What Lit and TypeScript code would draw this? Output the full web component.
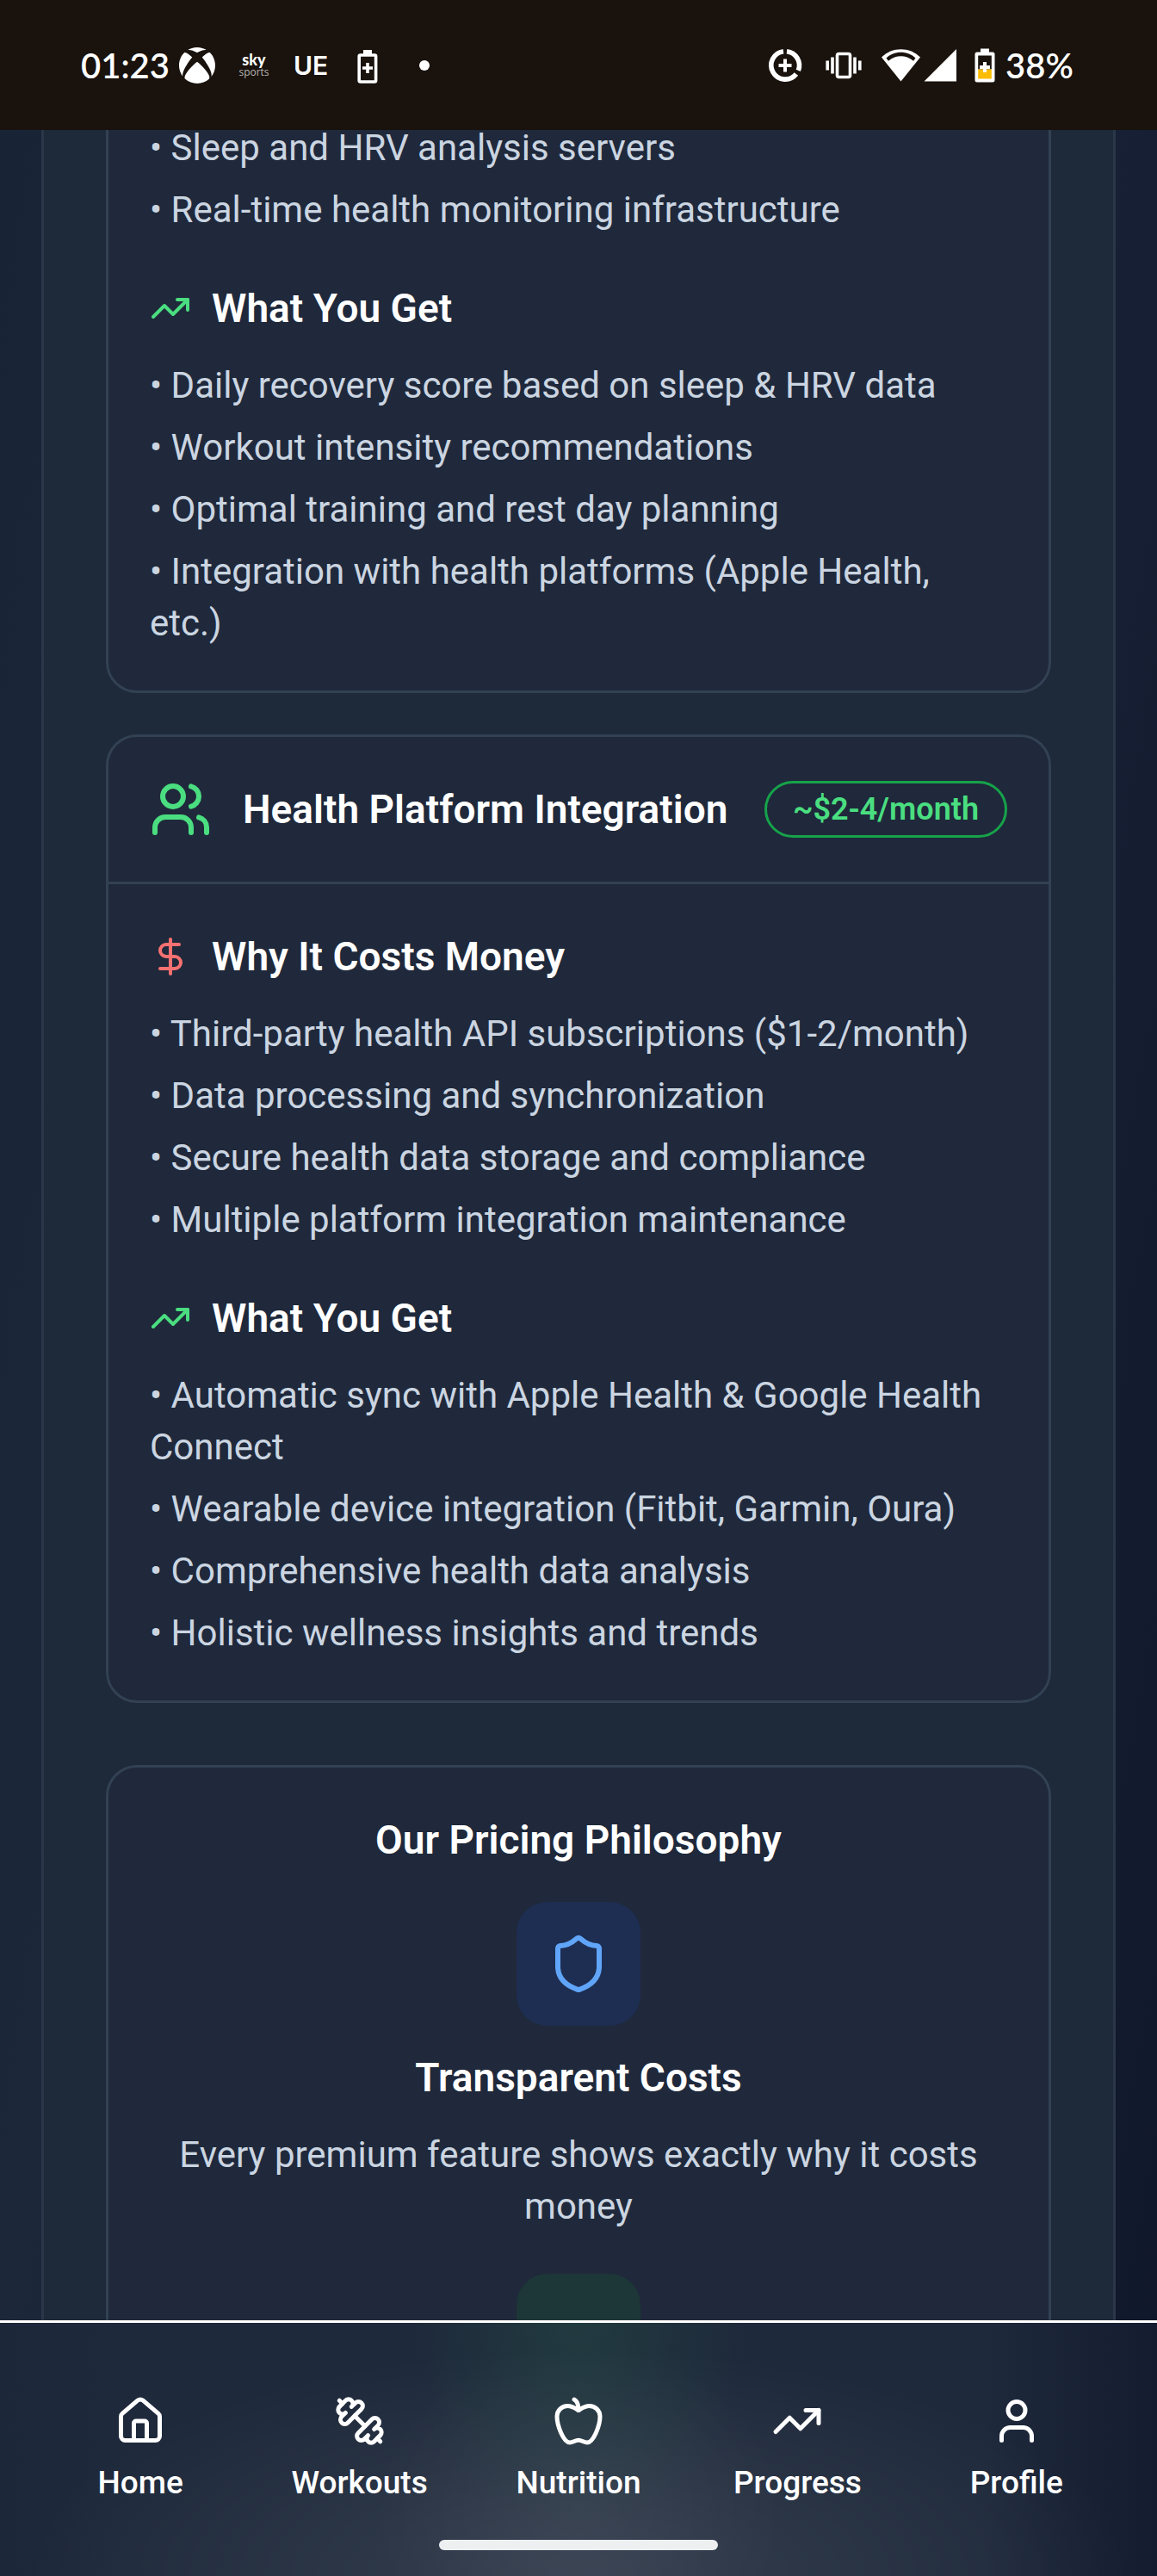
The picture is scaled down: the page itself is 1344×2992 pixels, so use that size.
import { LitElement, html, css, svg, type TemplateResult, type SVGTemplateResult } from "lit";
import { customElement, property } from "lit/decorators.js";

type IconName = "home" | "dumbbell" | "apple" | "trend" | "user" | "users" | "dollar" | "shield";

const ICONS: Record<IconName, SVGTemplateResult> = {
  home: svg`
    <path d="M15 21v-8a1 1 0 0 0-1-1h-4a1 1 0 0 0-1 1v8"/>
    <path d="M3 10a2 2 0 0 1 .709-1.528l7-5.999a2 2 0 0 1 2.582 0l7 5.999A2 2 0 0 1 21 10v9a2 2 0 0 1-2 2H5a2 2 0 0 1-2-2z"/>`,
  dumbbell: svg`
    <path d="M14.4 14.4 9.6 9.6"/>
    <path d="M18.657 21.485a2 2 0 1 1-2.829-2.828l-1.767 1.768a2 2 0 1 1-2.829-2.829l6.364-6.364a2 2 0 1 1 2.829 2.829l-1.768 1.767a2 2 0 1 1 2.828 2.829z"/>
    <path d="m21.5 21.5-1.4-1.4"/>
    <path d="M3.9 3.9 2.5 2.5"/>
    <path d="M6.404 12.768a2 2 0 1 1-2.829-2.829l1.768-1.767a2 2 0 1 1-2.828-2.829l2.828-2.828a2 2 0 1 1 2.829 2.828l1.767-1.768a2 2 0 1 1 2.829 2.829z"/>`,
  apple: svg`
    <path d="M12 20.94c1.5 0 2.75 1.06 4 1.06 3 0 6-8 6-12.22A4.91 4.91 0 0 0 17 5c-2.22 0-4 1.44-5 2-1-.56-2.78-2-5-2a4.9 4.9 0 0 0-5 4.78C2 14 5 22 8 22c1.25 0 2.5-1.06 4-1.06Z"/>
    <path d="M10 2c1 .5 2 2 2 5"/>`,
  trend: svg`
    <polyline points="22 7 13.5 15.5 8.5 10.5 2 17"/>
    <polyline points="16 7 22 7 22 13"/>`,
  user: svg`
    <path d="M19 21v-2a4 4 0 0 0-4-4H9a4 4 0 0 0-4 4v2"/>
    <circle cx="12" cy="7" r="4"/>`,
  users: svg`
    <path d="M16 21v-2a4 4 0 0 0-4-4H6a4 4 0 0 0-4 4v2"/>
    <circle cx="9" cy="7" r="4"/>
    <path d="M22 21v-2a4 4 0 0 0-3-3.87"/>
    <path d="M16 3.13a4 4 0 0 1 0 7.75"/>`,
  dollar: svg`
    <line x1="12" x2="12" y1="2" y2="22"/>
    <path d="M17 5H9.5a3.5 3.5 0 0 0 0 7h5a3.5 3.5 0 0 1 0 7H6"/>`,
  shield: svg`
    <path d="M20 13c0 5-3.5 7.5-7.66 8.95a1 1 0 0 1-.67-.01C7.5 20.5 4 18 4 13V6a1 1 0 0 1 1-1c2 0 4.5-1.2 6.24-2.72a1.17 1.17 0 0 1 1.52 0C14.51 3.81 17 5 19 5a1 1 0 0 1 1 1z"/>`,
};

@customElement("line-icon")
export class LineIcon extends LitElement {
  @property() name: IconName = "home";

  static styles = css`
    :host { display: block; width: 48px; height: 48px; flex: none; }
    .glyph {
      display: block; width: 100%; height: 100%;
      fill: none; stroke: currentColor; stroke-width: 2;
      stroke-linecap: round; stroke-linejoin: round;
    }
  `;

  render() {
    return html`<svg class="glyph" viewBox="0 0 24 24" aria-hidden="true">${ICONS[this.name]}</svg>`;
  }
}

@customElement("status-bar")
export class StatusBar extends LitElement {
  static styles = css`
    :host {
      display: flex; align-items: center; justify-content: space-between;
      height: 151px; padding: 0 94px; box-sizing: border-box;
      background: #19120d; color: #fff;
      font-family: Lato, "Liberation Sans", sans-serif;
      font-size: 40px; line-height: 48px; font-weight: 600;
    }
    .side { display: flex; align-items: center; }
    .notices { gap: 18px; }
    .system { gap: 20px; }
    .time { width: 93px; white-space: nowrap; }
    .level { display: flex; align-items: center; gap: 12px; }
    .percent { min-width: 82px; }
    .icon { display: block; flex: none; }
    .sky {
      width: 48px; text-align: center; color: #b8b5b3;
      font-family: "Open Sans", sans-serif; font-size: 12px; line-height: 14px; font-weight: 400;
    }
    .brand {
      display: block; color: #fff;
      font-family: Lato, sans-serif; font-size: 18px; line-height: 16px; font-weight: 900;
    }
    .ue { width: 48px; text-align: center; font-family: Inter, sans-serif; font-size: 30px; font-weight: 600; }
  `;

  render() {
    return html`
      <div class="side notices">
        <span class="time">01:23</span>
        <svg class="icon" width="48" height="48" viewBox="-1.7 -1.7 27.4 27.4" fill="#fff" role="img" aria-label="Xbox">
          <path d="M4.102 21.033C6.211 22.881 8.977 24 12 24c3.026 0 5.789-1.119 7.902-2.967 1.877-1.912-4.316-8.709-7.902-11.417-3.582 2.708-9.779 9.505-7.898 11.417zm11.16-14.406c2.5 2.961 7.484 10.313 6.076 12.912C23.002 17.48 24 14.861 24 12.004c0-3.34-1.365-6.362-3.57-8.536 0 0-.027-.022-.082-.042-.063-.022-.152-.045-.281-.045-.592 0-1.985.434-4.805 3.246zM3.654 3.426c-.057.02-.082.041-.086.042C1.365 5.642 0 8.664 0 12.004c0 2.854.998 5.473 2.661 7.533-1.401-2.605 3.579-9.951 6.08-12.91-2.82-2.813-4.216-3.245-4.806-3.245-.131 0-.223.021-.281.046v-.002zM12 3.551S9.055 1.828 6.755 1.746c-.903-.033-1.454.295-1.521.339C7.379.646 9.659 0 11.984 0H12c2.334 0 4.605.646 6.766 2.085-.068-.046-.615-.372-1.52-.339C14.946 1.828 12 3.545 12 3.545v.006z"/>
        </svg>
        <span class="sky"><span class="brand">sky</span>sports</span>
        <span class="ue">UE</span>
        <svg class="icon" width="48" height="48" viewBox="0 0 48 48" fill="none" stroke="#fff" stroke-width="3.6" aria-hidden="true">
          <rect x="14.2" y="12" width="19.4" height="31" rx="1.5"/>
          <path d="M19 9h10" stroke-width="6"/>
          <path d="M24 21v12M18 27h12"/>
        </svg>
        <svg class="icon" width="48" height="48" viewBox="0 0 48 48" fill="#fff" aria-hidden="true"><circle cx="24" cy="24" r="6"/></svg>
      </div>
      <div class="side system">
        <svg class="icon" width="48" height="48" viewBox="0 0 48 48" fill="none" stroke="#fff" stroke-width="5.6" aria-hidden="true">
          <path d="M26 7.700A16.3 16.3 0 0 1 39.3 29.9"/>
          <path d="M36.9 34A16.3 16.3 0 1 1 22 7.7"/>
          <path d="M24 16.5v15M16.5 24h15" stroke-width="4"/>
        </svg>
        <svg class="icon" width="48" height="48" viewBox="0 0 48 48" fill="none" stroke="#fff" stroke-width="3.6" aria-hidden="true">
          <rect x="16.5" y="10.5" width="15" height="27" rx="2"/>
          <path d="M11 14.5v19M37 14.5v19M5.2 18.5v11M42.8 18.5v11"/>
        </svg>
        <svg class="icon" width="88" height="48" viewBox="0 0 88 48" fill="#fff" aria-hidden="true">
          <path d="M0 14.5C12 2 33 2 45 14.5L22.5 42.5Z"/>
          <path d="M5.5 15.5C14 6.5 31 6.5 39.5 15.5L37 18.7C28 11.5 17 11.5 8 18.7Z" fill="#19120d"/>
          <path d="M49.5 42.5H87V5Z"/>
        </svg>
        <div class="level">
          <svg class="icon" width="24" height="48" viewBox="0 0 24 48" aria-hidden="true">
            <path d="M7 4.5h10v4h4q2.5 0 2.5 2.5v30q0 2.5-2.5 2.5h-18q-2.5 0-2.5-2.5v-30q0-2.5 2.5-2.5h4z" fill="#fff"/>
            <rect x="4.2" y="12.5" width="15.6" height="16" fill="#19120d"/>
            <rect x="4.2" y="28.5" width="15.6" height="11" fill="#fbbc04"/>
            <path d="M12 20v12M6 26h12" stroke="#fff" stroke-width="4"/>
          </svg>
          <span class="percent">38%</span>
        </div>
      </div>
    `;
  }
}

interface Tab { label: string; icon: IconName; }

const TABS: Tab[] = [
  { label: "Home", icon: "home" },
  { label: "Workouts", icon: "dumbbell" },
  { label: "Nutrition", icon: "apple" },
  { label: "Progress", icon: "trend" },
  { label: "Profile", icon: "user" },
];

@customElement("tab-bar")
export class TabBar extends LitElement {
  static styles = css`
    :host {
      display: block; border-top: 3px solid #fff; color: #fff;
      background:
        radial-gradient(200px 240px at 50% 0, rgba(45, 120, 80, 0.22), transparent),
        radial-gradient(240px 200px at 50% 75%, rgba(255, 255, 255, 0.05), transparent),
        radial-gradient(48% 90% at 50% 100%, rgba(255, 255, 255, 0.1), transparent),
        linear-gradient(to right, #1d273a, #1e293b 10%, #1e293b 85%, #141d30);
    }
    .tabs { display: grid; grid-template-columns: repeat(5, 1fr); padding: 84px 36px 42px; }
    .tab {
      display: flex; flex-direction: column; align-items: center; gap: 18px;
      color: inherit; text-decoration: none;
      font-size: 37px; line-height: 48px; font-weight: 500;
    }
    .icon { width: 60px; height: 60px; }
    .handle { width: 324px; height: 12px; margin: 0 auto 30px; border-radius: 6px; background: #edeff1; }
  `;

  render() {
    return html`
      <nav class="tabs" aria-label="Main">
        ${TABS.map((t) => html`
          <a class="tab" href="#${t.label.toLowerCase()}"><line-icon class="icon" name=${t.icon}></line-icon>${t.label}</a>
        `)}
      </nav>
      <div class="handle"></div>
    `;
  }
}

const ANALYSIS_COSTS = [
  "Sleep and HRV analysis servers",
  "Real-time health monitoring infrastructure",
];

const ANALYSIS_BENEFITS = [
  "Daily recovery score based on sleep & HRV data",
  "Workout intensity recommendations",
  "Optimal training and rest day planning",
  "Integration with health platforms (Apple Health, etc.)",
];

const PLATFORM_COSTS = [
  "Third-party health API subscriptions ($1-2/month)",
  "Data processing and synchronization",
  "Secure health data storage and compliance",
  "Multiple platform integration maintenance",
];

const PLATFORM_BENEFITS = [
  "Automatic sync with Apple Health & Google Health Connect",
  "Wearable device integration (Fitbit, Garmin, Oura)",
  "Comprehensive health data analysis",
  "Holistic wellness insights and trends",
];

@customElement("app-root")
export class AppRoot extends LitElement {
  static styles = css`
    :host {
      display: grid; grid-template-rows: auto minmax(0, 1fr) auto;
      height: 100vh; overflow: hidden; color: #fff;
      font-family: Roboto, "Liberation Sans", sans-serif;
      background: linear-gradient(100deg, #192336, #1c273a 25%, #161f33 75%, #10172a);
    }
    .view { overflow: hidden; padding: 0 48px; }
    .panel {
      display: flex; flex-direction: column; gap: 48px;
      margin-top: -60px; padding: 0 72px;
      border: solid #2a3749; border-width: 0 3px;
      background: #1e293a;
    }
    .card { border: 3px solid #324153; border-radius: 36px; background: #1f293b; }
    .head {
      display: flex; align-items: center; gap: 36px;
      padding: 48px; border-bottom: 3px solid #324153;
    }
    .title { flex: 1; margin: 0; font-size: 46px; line-height: 72px; font-weight: 600; }
    .large { width: 72px; height: 72px; }
    .price {
      padding: 6px 30px; border: 3px solid #16a34a; border-radius: 36px;
      color: #4ade80; font-size: 36px; line-height: 48px; font-weight: 600; white-space: nowrap;
    }
    .body { display: flex; flex-direction: column; gap: 48px; padding: 48px; }
    .section { display: flex; flex-direction: column; gap: 24px; }
    .subhead {
      display: flex; align-items: center; gap: 24px; margin: 0;
      font-size: 46px; line-height: 72px; font-weight: 600;
    }
    .green { color: #4ade80; }
    .red { color: #f87171; }
    .blue { color: #60a5fa; }
    .list {
      display: flex; flex-direction: column; gap: 12px;
      margin: 0; padding: 0; list-style: none;
      color: #cbd5e1; font-size: 42px; line-height: 60px;
    }
    .philosophy {
      display: flex; flex-direction: column; gap: 36px;
      margin-top: 24px; padding: 48px; text-align: center;
    }
    .values { display: flex; flex-direction: column; gap: 48px; }
    .value { display: flex; flex-direction: column; align-items: center; gap: 24px; }
    .tile { display: grid; place-items: center; width: 144px; height: 144px; border-radius: 36px; }
    .tile-blue { background: #1e2e52; }
    .tile-green { background: #1d3637; }
    .text { margin: 0; color: #cbd5e1; font-size: 42px; line-height: 60px; }
  `;

  private list(items: string[]): TemplateResult {
    return html`<ul class="list">${items.map((item) => html`<li>• ${item}</li>`)}</ul>`;
  }

  private section(icon: IconName, tone: string, title: string, items: string[]): TemplateResult {
    return html`
      <section class="section">
        <h4 class="subhead"><line-icon class=${tone} name=${icon}></line-icon>${title}</h4>
        ${this.list(items)}
      </section>
    `;
  }

  render() {
    return html`
      <status-bar></status-bar>
      <main class="view">
        <div class="panel">
          <article class="card">
            <div class="body">
              ${this.list(ANALYSIS_COSTS)}
              ${this.section("trend", "green", "What You Get", ANALYSIS_BENEFITS)}
            </div>
          </article>
          <article class="card">
            <header class="head">
              <line-icon class="large green" name="users"></line-icon>
              <h3 class="title">Health Platform Integration</h3>
              <span class="price">~$2-4/month</span>
            </header>
            <div class="body">
              ${this.section("dollar", "red", "Why It Costs Money", PLATFORM_COSTS)}
              ${this.section("trend", "green", "What You Get", PLATFORM_BENEFITS)}
            </div>
          </article>
          <section class="card philosophy">
            <h3 class="title">Our Pricing Philosophy</h3>
            <div class="values">
              <div class="value">
                <div class="tile tile-blue"><line-icon class="large blue" name="shield"></line-icon></div>
                <h4 class="title">Transparent Costs</h4>
                <p class="text">Every premium feature shows exactly why it costs money</p>
              </div>
              <div class="value"><div class="tile tile-green"></div></div>
            </div>
          </section>
        </div>
      </main>
      <tab-bar></tab-bar>
    `;
  }
}
